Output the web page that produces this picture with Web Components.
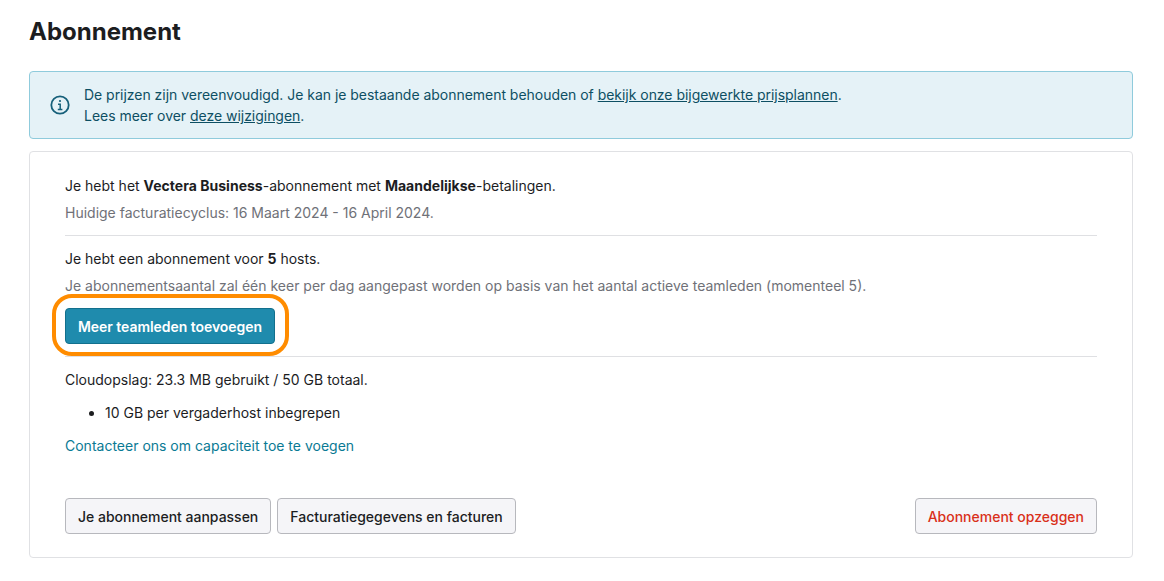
<!DOCTYPE html>
<html>
<head>
<meta charset="utf-8">
<style>
    html, body { margin: 0; padding: 0; background: #fff; }
    body { font-family: Inter, "Liberation Sans", sans-serif; font-size: 14px; color: #1c1d1f; overflow: hidden; }
    page-root { padding: 0 31px 0 29px; }
    a { color: inherit; }
    b { letter-spacing: 0.02px; }
</style>
</head>
<body>
<page-root>
    <info-banner>
        De prijzen zijn vereenvoudigd. Je kan je bestaande abonnement behouden of <a href="#">bekijk onze bijgewerkte prijsplannen</a>.<br>
        Lees meer over <a href="#">deze wijzigingen</a>.
    </info-banner>
    <plan-card>
        <plan-section>
            <p-line>Je hebt het <b>Vectera Business</b>-abonnement met <b>Maandelijkse</b>-betalingen.</p-line>
            <p-line muted>Huidige facturatiecyclus: 16 Maart 2024 - 16 April 2024.</p-line>
        </plan-section>
        <plan-section>
            <p-line>Je hebt een abonnement voor <b>5</b> hosts.</p-line>
            <p-line muted>Je abonnementsaantal zal één keer per dag aangepast worden op basis van het aantal actieve teamleden (momenteel 5).</p-line>
            <ring-mark><ui-button primary>Meer teamleden toevoegen</ui-button></ring-mark>
        </plan-section>
        <plan-section last>
            <p-line>Cloudopslag: 23.3 MB gebruikt / 50 GB totaal.</p-line>
            <p-line bullet>10 GB per vergaderhost inbegrepen</p-line>
            <p-line link>Contacteer ons om capaciteit toe te voegen</p-line>
        </plan-section>
        <div slot="actions"><ui-button>Je abonnement aanpassen</ui-button><ui-button>Facturatiegegevens en facturen</ui-button></div>
        <ui-button slot="danger" danger>Abonnement opzeggen</ui-button>
    </plan-card>
</page-root>
<script>
class PageRoot extends HTMLElement {
    constructor() {
        super()
        this.attachShadow({ mode: 'open' })
        this.shadowRoot.innerHTML = `
            <style>
                :host { display: block; }
                h1 { margin: 0; padding-top: 17px; height: 54px; font-size: 24px; line-height: 29px; font-weight: 700; color: #1c1d1f; }
            </style>
            <h1>Abonnement</h1>
            <slot></slot>
        `
    }
}

class InfoBanner extends HTMLElement {
    constructor() {
        super()
        this.attachShadow({ mode: 'open' })
        this.shadowRoot.innerHTML = `
            <style>
                :host {
                    display: flex; align-items: center; box-sizing: border-box; height: 68px;
                    background: #e5f2f7; border: 1px solid #8fcbdc; border-radius: 4px;
                    padding: 0 20px; gap: 14px; color: #0d4f63; line-height: 21px; font-size: 14px;
                    letter-spacing: -0.03px;
                }
                svg { flex: none; }
            </style>
            <svg width="20" height="20" viewBox="0 0 20 20" fill="none" stroke="#16607a" stroke-width="1.8">
                <circle cx="10" cy="10" r="8.7"/>
                <circle cx="10" cy="6" r="1.1" fill="#16607a" stroke="none"/>
                <path d="M8 9.2h2.2v5M7.8 14.5h4.6" stroke-width="1.5"/>
            </svg>
            <div><slot></slot></div>
        `
    }
}

class PlanCard extends HTMLElement {
    constructor() {
        super()
        this.attachShadow({ mode: 'open' })
        this.shadowRoot.innerHTML = `
            <style>
                :host {
                    display: block; box-sizing: border-box; margin-top: 12px; height: 407px;
                    background: #fff; border: 1px solid #e0e1e4; border-radius: 4px;
                    padding: 20px 35px 23px;
                }
                .footer { display: flex; justify-content: space-between; margin-top: 39px; }
            </style>
            <slot></slot>
            <div class="footer"><slot name="actions"></slot><slot name="danger"></slot></div>
        `
    }
}

class PlanSection extends HTMLElement {
    constructor() {
        super()
        this.attachShadow({ mode: 'open' })
        this.shadowRoot.innerHTML = `
            <style>
                :host { display: block; border-bottom: 1px solid #dfe0e3; padding-bottom: 9px; margin-bottom: 9px; }
                :host([last]) { border-bottom: 0; padding-bottom: 0; margin-bottom: 0; }
            </style>
            <slot></slot>
        `
    }
}

class PLine extends HTMLElement {
    constructor() {
        super()
        this.attachShadow({ mode: 'open' })
        this.shadowRoot.innerHTML = `
            <style>
                :host { display: block; font-size: 14px; line-height: 27px; height: 27px; white-space: nowrap; color: #1c1d1f; }
                :host([muted]) { color: #6f7178; }
                :host([link]) { color: #0a7a94; margin-top: 6px; }
                :host([bullet]) { display: list-item; list-style: disc; margin-left: 40px; margin-top: 6px; }
            </style>
            <slot></slot>
        `
    }
}

class RingMark extends HTMLElement {
    constructor() {
        super()
        this.attachShadow({ mode: 'open' })
        this.shadowRoot.innerHTML = `
            <style>
                :host { display: flex; position: relative; width: fit-content; margin-top: 9px; margin-bottom: 3px; }
                .ring {
                    position: absolute; inset: -14px -14px -12px -13px;
                    border: 4px solid #ff8c00; border-radius: 20px; pointer-events: none;
                }
            </style>
            <slot></slot>
            <div class="ring"></div>
        `
    }
}

class UiButton extends HTMLElement {
    constructor() {
        super()
        this.attachShadow({ mode: 'open' })
        this.shadowRoot.innerHTML = `
            <style>
                :host {
                    display: inline-flex; align-items: center; box-sizing: border-box; height: 36px;
                    padding: 0 12px; border: 1px solid #b7b8bd; border-radius: 4px;
                    background: #f5f5f8; color: #1c1d1f; font-size: 14px; font-weight: 500; white-space: nowrap;
                }
                :host(:not([primary]):not([danger])) { margin-right: 6px; letter-spacing: -0.01px; }
                :host([primary]) { background: #1f8bad; border-color: #12708d; color: #fff; font-weight: 600; letter-spacing: -0.05px; }
                :host([danger]) { color: #d9301a; }
            </style>
            <slot></slot>
        `
    }
}

customElements.define('page-root', PageRoot)
customElements.define('info-banner', InfoBanner)
customElements.define('plan-card', PlanCard)
customElements.define('plan-section', PlanSection)
customElements.define('p-line', PLine)
customElements.define('ring-mark', RingMark)
customElements.define('ui-button', UiButton)
</script>
</body>
</html>
